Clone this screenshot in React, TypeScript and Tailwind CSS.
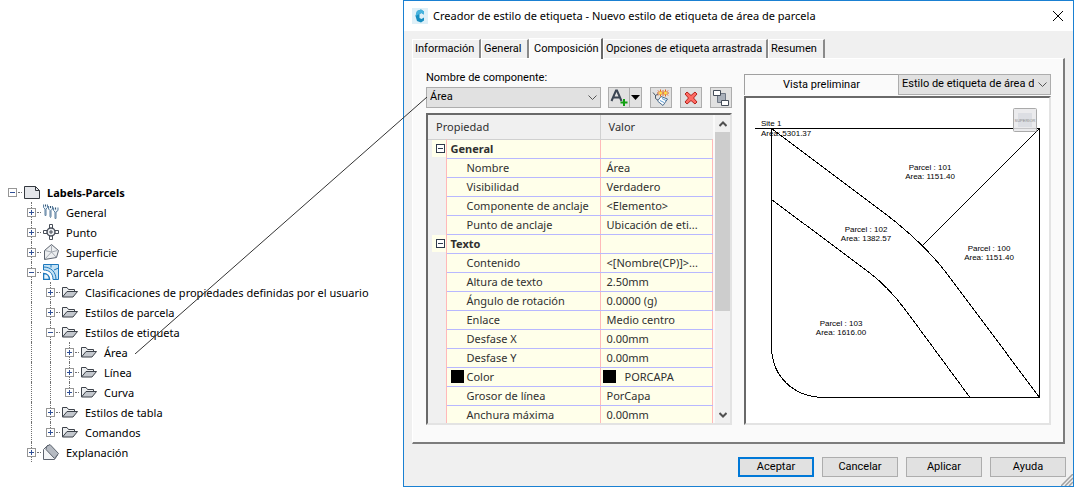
import { useState } from "react";

type IconName = "page" | "styles" | "point" | "surface" | "parcel" | "folder" | "grading";

interface TreeRow {
  label: string;
  level: number;
  icon: IconName;
  open?: boolean;
  guides: boolean[];
  last?: boolean;
}

const treeRows: TreeRow[] = [
  { label: "Labels-Parcels", level: 0, icon: "page", open: true, guides: [] },
  { label: "General", level: 1, icon: "styles", guides: [false] },
  { label: "Punto", level: 1, icon: "point", guides: [false] },
  { label: "Superficie", level: 1, icon: "surface", guides: [false] },
  { label: "Parcela", level: 1, icon: "parcel", open: true, guides: [false] },
  { label: "Clasificaciones de propiedades definidas por el usuario", level: 2, icon: "folder", guides: [false, true] },
  { label: "Estilos de parcela", level: 2, icon: "folder", guides: [false, true] },
  { label: "Estilos de etiqueta", level: 2, icon: "folder", open: true, guides: [false, true] },
  { label: "Área", level: 3, icon: "folder", guides: [false, true, true] },
  { label: "Línea", level: 3, icon: "folder", guides: [false, true, true] },
  { label: "Curva", level: 3, icon: "folder", guides: [false, true, true], last: true },
  { label: "Estilos de tabla", level: 2, icon: "folder", guides: [false, true] },
  { label: "Comandos", level: 2, icon: "folder", guides: [false, true], last: true },
  { label: "Explanación", level: 1, icon: "grading", guides: [false] },
];

function TreeIcon({ name }: { name: IconName }) {
  return (
    <svg viewBox="0 0 16 16" className="size-4 shrink-0" aria-hidden="true">
      {name === "page" && (
        <path d="M.5 2.500v12h15v-8l-4-4z M11.500 2.500v4h4" fill="#e4e6ea" stroke="#34383f" />
      )}
      {name === "styles" && (
        <g fill="#e6eff7" stroke="#5b7f9f" strokeLinejoin="round">
          <path d="M.5.500v3l1.500 1.500v6l.5 1 .5-1V5L4.500 3.500v-3" />
          <path d="M5.500 2v3L7 6.500v6l.5 1 .5-1v-6L9.500 5V2" />
          <path d="M10.500 3.500v3L12 8v6l.5 1 .5-1V8l2-1.500v-3" />
          <path d="M2.500.500v2M7.500 2v2M12.500 3.500v2" stroke="#36546f" />
        </g>
      )}
      {name === "point" && (
        <g fill="none" stroke="#484e59">
          <circle cx="8" cy="8" r="4" fill="#eef0f3" strokeWidth="1.500" />
          <path d="M6.500 4V.500h3V4M6.500 12v3.500h3V12M4 6.500H.500v3H4M12 6.500h3.500v3H12" />
          <path d="M8 6v4M6 8h4" />
        </g>
      )}
      {name === "surface" && (
        <g stroke="#5d646f" strokeLinejoin="round">
          <path d="M8.500.500 15.500 6.500 13.500 13.500 1.500 15.500 1.500 6.500z" fill="#eceef0" />
          <path d="M8.500 1.500V8M8.500 8l6-1.500M8.500 8l4.500 5M8.500 8 2 15M8.500 8 2 6.500" fill="none" stroke="#a5abb3" />
        </g>
      )}
      {name === "parcel" && (
        <g fill="none" stroke="#1c78bd">
          <path d="M.5.500h15v15h-5.500C10 9 6 6 .5 6z" fill="#c6e3f5" />
          <path d="M.5 3C8 3 13 8 13 15.500M8 .5v3M11 6l4.500-2" />
          <path d="M.5 9.500v6h6C6.500 12 4 9.500.5 9.500z" fill="#e6f4fc" strokeWidth="1.500" />
        </g>
      )}
      {name === "folder" && (
        <g stroke="#3c4149" strokeLinejoin="round">
          <path d="M.5 13V3.500h4.500l1.500 2h6v2" fill="#eceef0" />
          <path d="M.5 13 5 7.500h10.500L11 13z" fill="#c3c7cd" />
        </g>
      )}
      {name === "grading" && (
        <g stroke="#5c636e" strokeLinejoin="round">
          <path d="M.5 15.500V5.500L5 1l9.500 10-3 4.500z" fill="#f3f4f6" />
          <path d="M3.500 2.500 7 .5l8.500 9-4 5L3 5.500z" fill="#b5bac2" />
        </g>
      )}
    </svg>
  );
}

function TreeItem({ row }: { row: TreeRow }) {
  return (
    <li className="flex h-5 items-center">
      {row.guides.map((on, i) => (
        <span key={i} className="flex h-5 w-[19px] shrink-0 pl-1">
          {on && <span className="border-l border-dotted border-[#707070]" />}
        </span>
      ))}
      <span className="relative flex h-5 w-4 shrink-0 items-center">
        {row.level > 0 && (
          <span
            className={
              row.last
                ? "absolute top-0 left-1 h-[10px] border-l border-dotted border-[#707070]"
                : "absolute top-0 left-1 h-5 border-l border-dotted border-[#707070]"
            }
          />
        )}
        <button
          type="button"
          aria-label={row.open ? `Contraer ${row.label}` : `Expandir ${row.label}`}
          className="relative size-[9px] border border-[#969696] bg-white"
        >
          <svg viewBox="0 0 7 7" className="size-[7px]" stroke="#2f4f96" aria-hidden="true">
            <path d={row.open ? "M1 3.500h5" : "M1 3.500h5M3.500 1v5"} />
          </svg>
        </button>
        <span className="ml-px w-1 border-t border-dotted border-[#707070]" />
      </span>
      <TreeIcon name={row.icon} />
      <span className={row.level === 0 ? "ml-[7px] pt-[2px] font-bold whitespace-nowrap" : "ml-[7px] pt-[2px] whitespace-nowrap"}>
        {row.label}
      </span>
    </li>
  );
}

interface Property {
  name: string;
  value?: string;
  group?: boolean;
  swatch?: boolean;
}

const properties: Property[] = [
  { name: "General", group: true },
  { name: "Nombre", value: "Área" },
  { name: "Visibilidad", value: "Verdadero" },
  { name: "Componente de anclaje", value: "<Elemento>" },
  { name: "Punto de anclaje", value: "Ubicación de eti..." },
  { name: "Texto", group: true },
  { name: "Contenido", value: "<[Nombre(CP)]>..." },
  { name: "Altura de texto", value: "2.50mm" },
  { name: "Ángulo de rotación", value: "0.0000 (g)" },
  { name: "Enlace", value: "Medio centro" },
  { name: "Desfase X", value: "0.00mm" },
  { name: "Desfase Y", value: "0.00mm" },
  { name: "Color", value: "PORCAPA", swatch: true },
  { name: "Grosor de línea", value: "PorCapa" },
  { name: "Anchura máxima", value: "0.00mm" },
];

function PropertyTable() {
  return (
    <div className="flex h-[312px] overflow-hidden border-2 border-t-[#696969] border-r-[#e3e3e3] border-b-[#e3e3e3] border-l-[#696969] bg-[#f0f0f0] font-['Noto_Sans',sans-serif] text-[11px] text-[#303030]">
      <table className="min-w-0 flex-1 table-fixed border-collapse">
        <colgroup>
          <col className="w-[18px]" />
          <col className="w-[154px]" />
          <col />
        </colgroup>
        <thead>
          <tr className="h-6 border-b border-[#d0d0d0] text-left">
            <th colSpan={2} className="border-r border-[#d0d0d0] p-0 pl-2 font-normal">Propiedad</th>
            <th className="p-0 pl-2 font-normal">Valor</th>
          </tr>
        </thead>
        <tbody>
          {properties.map((p) => (
            <tr key={p.name} className="h-[19px] leading-[18px]">
              <td className="border-r border-[#ffb9b9] p-0">
                {p.group && (
                  <span className="ml-1 flex h-[17px] items-center bg-[#ffffea] pl-1">
                    <button
                      type="button"
                      aria-label={`Contraer ${p.name}`}
                      className="flex size-[9px] items-center justify-center border border-[#303a4c] bg-white"
                    >
                      <span className="h-px w-[5px] bg-[#303a4c]" />
                    </button>
                  </span>
                )}
              </td>
              <td className="border-r border-b border-r-[#ffb9b9] border-b-[#b8b8ff] bg-[#ffffea] p-0">
                <span className={p.group ? "block pl-1 font-bold" : "flex items-center whitespace-nowrap pl-1"}>
                  {!p.group && <span className={p.swatch ? "mr-[3px] size-[13px] bg-black" : "mr-[3px] size-[13px]"} />}
                  {p.name}
                </span>
              </td>
              <td className="overflow-hidden border-r border-b border-r-[#ffb9b9] border-b-[#b8b8ff] bg-[#ffffea] p-0">
                <span className={p.swatch ? "flex items-center gap-[9px] pl-[2px]" : "flex items-center whitespace-nowrap pl-[6px]"}>
                  {p.swatch && <span className="size-[13px] bg-black" />}
                  {p.value}
                </span>
              </td>
            </tr>
          ))}
        </tbody>
      </table>
      <div className="flex w-[17px] flex-col border-l-2 border-[#fafafa]">
        <button type="button" aria-label="Subir" className="flex h-[17px] items-center justify-center">
          <svg viewBox="0 0 8 6" className="h-[6px] w-2" fill="none" stroke="#505050" strokeWidth="2" aria-hidden="true">
            <path d="M.5 5 4 1.500 7.500 5" />
          </svg>
        </button>
        <span className="h-[179px] bg-[#cdcdcd]" />
        <button type="button" aria-label="Bajar" className="mt-auto flex h-[17px] items-center justify-center">
          <svg viewBox="0 0 8 6" className="h-[6px] w-2" fill="none" stroke="#505050" strokeWidth="2" aria-hidden="true">
            <path d="M.5 1 4 4.500 7.500 1" />
          </svg>
        </button>
      </div>
    </div>
  );
}

function Select({ label, id, options }: { label?: string; id: string; options: string[] }) {
  return (
    <div className="relative flex min-w-0 flex-1">
      <select
        id={id}
        aria-label={label}
        className="h-[21px] w-full appearance-none overflow-hidden border border-[#adadad] bg-[#e1e1e1] pr-4 pl-[3px] text-clip text-black"
      >
        {options.map((o) => (
          <option key={o}>{o}</option>
        ))}
      </select>
      <svg viewBox="0 0 9 6" className="pointer-events-none absolute top-2 right-1 h-[6px] w-[9px]" fill="none" stroke="#555" aria-hidden="true">
        <path d="M.5.500l4 4 4-4" />
      </svg>
    </div>
  );
}

const toolClass = "flex h-[21px] w-[22px] items-center justify-center border border-[#adadad] bg-[#e1e1e1]";

function Toolbar() {
  return (
    <div className="flex gap-2">
      <div className="flex">
        <button type="button" aria-label="Crear componente de texto" className={toolClass}>
          <svg viewBox="0 0 18 18" className="size-[18px] shrink-0" fill="none" aria-hidden="true">
            <path d="M1.500 12 6 1.500h1L11.500 12M3.500 8.500h6" stroke="#3c4654" strokeWidth="2" />
            <path d="M14 10v7M10.500 13.500h7" stroke="#12a012" strokeWidth="2" />
          </svg>
        </button>
        <button type="button" aria-label="Más tipos de componente" className="flex h-[21px] w-3 items-center justify-center border border-l-0 border-[#adadad] bg-[#e1e1e1]">
          <svg viewBox="0 0 9 5" className="h-[5px] w-[9px] shrink-0" aria-hidden="true">
            <path d="M0 0h9L4.500 5z" fill="#000" />
          </svg>
        </button>
      </div>
      <button type="button" aria-label="Copiar componente" className={toolClass}>
        <svg viewBox="0 0 18 18" className="size-[18px] shrink-0" fill="none" aria-hidden="true">
          <path d="M1 3.500 3.500 6.500 6 5M3.500 6v3.500L7 12" stroke="#4b5968" />
          <path d="M9 7.500 15.500 10 11 16.500 5.500 12z" fill="#fff" stroke="#4b6d8d" strokeLinejoin="round" />
          <path d="m8 11.500 4 2M10 9.500l4 2" stroke="#5f9fd6" />
          <path d="M8.500.500v7M6 1.500l5 5M11 1.500l-5 5M5 4h7M13.500.500v7M11 1.500l5 5M16 1.500l-5 5M10.500 4H17" stroke="#e2621b" />
          <circle cx="8.500" cy="4" r="1.500" fill="#ffe14a" />
          <circle cx="13.500" cy="4" r="1.500" fill="#ffe14a" />
        </svg>
      </button>
      <button type="button" aria-label="Suprimir componente" className={toolClass}>
        <svg viewBox="0 0 14 14" className="size-[14px] shrink-0" aria-hidden="true">
          <path d="M3 1 7 4.500 11 1l2 2-3.500 4L13 11l-2 2-4-3.500L3 13l-2-2 3.500-4L1 3z" fill="#ff6a62" stroke="#b3241c" strokeLinejoin="round" />
        </svg>
      </button>
      <button type="button" aria-label="Orden de dibujo de componentes" className={toolClass}>
        <svg viewBox="0 0 18 18" className="size-[18px] shrink-0" aria-hidden="true">
          <path d="M5.500 4.500h8v9h-8z" fill="#a9b0ba" stroke="#6e7784" />
          <path d="M1.500 1.500h7v5h-7zM9.500 11.500h7v5h-7z" fill="#fff" stroke="#444c58" />
        </svg>
      </button>
    </div>
  );
}

const parcelLabels = [
  { x: 184, y: 72, number: "Parcel : 101", area: "Area: 1151.40" },
  { x: 120, y: 134, number: "Parcel : 102", area: "Area: 1382.57" },
  { x: 243, y: 153, number: "Parcel : 100", area: "Area: 1151.40" },
  { x: 95, y: 228, number: "Parcel : 103", area: "Area: 1616.00" },
];

function Preview() {
  return (
    <div className="h-[329px] border-2 border-t-[#696969] border-r-[#e3e3e3] border-b-[#e3e3e3] border-l-[#696969] bg-white">
      <svg viewBox="0 0 303 325" className="size-full font-['Liberation_Sans',sans-serif] text-[8px]" role="img" aria-label="Vista preliminar del estilo">
        <g fill="none" stroke="#000" shapeRendering="crispEdges">
          <path d="M9 30.500h284.500v269H79C48 299.500 25.500 279 25.500 248V30.500" />
          <path d="M25.500 30.500 137 114Q178 145 202 177L293.500 299.500" />
          <path d="M25.500 101.500 120 172Q142 188 161 214L224 299.500M293.500 30.500 176 148" />
        </g>
        <text x="15" y="28">Site 1</text>
        <text x="15" y="38">Area: 5301.37</text>
        {parcelLabels.map((p) => (
          <g key={p.number} textAnchor="middle">
            <text x={p.x} y={p.y}>{p.number}</text>
            <text x={p.x} y={p.y + 9}>{p.area}</text>
          </g>
        ))}
        <rect x="267.500" y="10.500" width="23" height="23" rx="1" fill="#e8e8ea" fillOpacity=".85" stroke="#aaa" />
        <rect x="272" y="15" width="14" height="14" fill="#dcdee3" />
        <text x="279" y="24" textAnchor="middle" fill="#888" className="text-[4px]">SUPERIOR</text>
      </svg>
    </div>
  );
}

const tabs = [
  { name: "Información", width: "w-[69px]" },
  { name: "General", width: "w-12" },
  { name: "Composición", width: "w-[74px]" },
  { name: "Opciones de etiqueta arrastrada", width: "w-[165px]" },
  { name: "Resumen", width: "w-[57px]" },
];

function Tabs() {
  const [active, setActive] = useState("Composición");
  return (
    <div role="tablist" className="flex items-end">
      {tabs.map((t) => (
        <button
          key={t.name}
          type="button"
          role="tab"
          aria-selected={active === t.name}
          onClick={() => setActive(t.name)}
          className={`${t.width} ${
            active === t.name
              ? "relative z-10 -mb-px h-[21px] border-t border-r-2 border-l border-t-white border-r-[#696969] border-l-white bg-[#fafafa] pl-1 text-left whitespace-nowrap"
              : "h-[19px] border-t border-r-2 border-l border-t-white border-r-[#8a8a8a] border-l-white bg-[#f0f0f0] pl-[2px] text-left whitespace-nowrap"
          }`}
        >
          {t.name}
        </button>
      ))}
    </div>
  );
}

function Dialog() {
  return (
    <section
      role="dialog"
      aria-label="Creador de estilo de etiqueta"
      className="relative flex min-w-[600px] flex-1 flex-col border border-[#1a80d2] bg-[#f0f0f0] pb-[9px] font-['Roboto',sans-serif] text-[11px] text-black"
    >
      <header className="flex h-[30px] items-center bg-white pr-[10px] pl-2 font-['Noto_Sans',sans-serif]">
        <svg viewBox="0 0 16 16" className="size-4" aria-hidden="true">
          <path d="M0 0h16v16H0z" fill="#dff0f8" />
          <path d="M12 3.500 9 1.500 5 3 3.500 8 5 13l4 1.500 3-2v-3L9.500 11 7.500 10V6L9.500 5 12 6.500z" fill="#168dc0" />
          <path d="M12 3.500 9 1.500 5 3 3.500 8l4-2 2-1L12 6.500z" fill="#46b3de" />
        </svg>
        <h1 className="ml-[5px] flex-1 whitespace-nowrap">
          Creador de estilo de etiqueta - Nuevo estilo de etiqueta de área de parcela
        </h1>
        <button type="button" aria-label="Cerrar">
          <svg viewBox="0 0 10 10" className="size-[10px]" stroke="#000" aria-hidden="true">
            <path d="m0 0 10 10M10 0 0 10" />
          </svg>
        </button>
      </header>

      <div className="px-2 pt-[7px]">
        <Tabs />
        <div className="flex gap-3 border-t border-r-2 border-b-2 border-l border-t-white border-r-[#7c7c7c] border-b-[#7c7c7c] border-l-white bg-[#fafafa] pt-[11px] pr-3 pb-[17px] pl-[13px]">
          <div className="w-[306px] shrink-0">
            <label htmlFor="component" className="block h-4 leading-4">Nombre de componente:</label>
            <div className="mt-px mb-[5px] flex gap-[7px]">
              <Select id="component" options={["Área"]} />
              <Toolbar />
            </div>
            <PropertyTable />
          </div>
          <div className="min-w-0 flex-1 pt-1">
            <div className="mb-px flex">
              <div className="flex h-[21px] flex-1 items-center justify-center border-t border-l border-[#a0a0a0]">
                Vista preliminar
              </div>
              <Select id="preview-style" label="Estilo de vista preliminar" options={["Estilo de etiqueta de área de parcela"]} />
            </div>
            <Preview />
          </div>
        </div>
      </div>

      <footer className="flex justify-end gap-2 px-[7px] pt-[13px]">
        <button type="button" className="h-5 w-[76px] border-2 border-[#0078d7] bg-[#e1e1e1] leading-4">Aceptar</button>
        <button type="button" className="h-5 w-[76px] border border-[#adadad] bg-[#e1e1e1] leading-4">Cancelar</button>
        <button type="button" className="h-5 w-[76px] border border-[#adadad] bg-[#e1e1e1] leading-4">Aplicar</button>
        <button type="button" className="h-5 w-[76px] border border-[#adadad] bg-[#e1e1e1] leading-4">Ayuda</button>
      </footer>
      <svg viewBox="0 0 12 12" className="absolute right-0 bottom-0 size-3" stroke="#a0a0a0" strokeWidth="1.500" aria-hidden="true">
        <path d="M0 12 12 0M4 12l8-8M8 12l4-4" />
      </svg>
    </section>
  );
}

export default function App() {
  return (
    <main className="relative flex bg-white">
      <nav aria-label="Árbol de estilos" className="w-[403px] shrink-0 pt-[182px] pl-2">
        <ul className="font-['Noto_Sans',sans-serif] text-[11px] text-black">
          {treeRows.map((row) => (
            <TreeItem key={row.label} row={row} />
          ))}
        </ul>
      </nav>
      <Dialog />
      <svg viewBox="0 0 292 257" className="pointer-events-none absolute top-[97px] left-[135px] z-20 h-[257px] w-[292px]" aria-hidden="true">
        <path d="M0 257 292 0" stroke="#333" />
      </svg>
    </main>
  );
}
